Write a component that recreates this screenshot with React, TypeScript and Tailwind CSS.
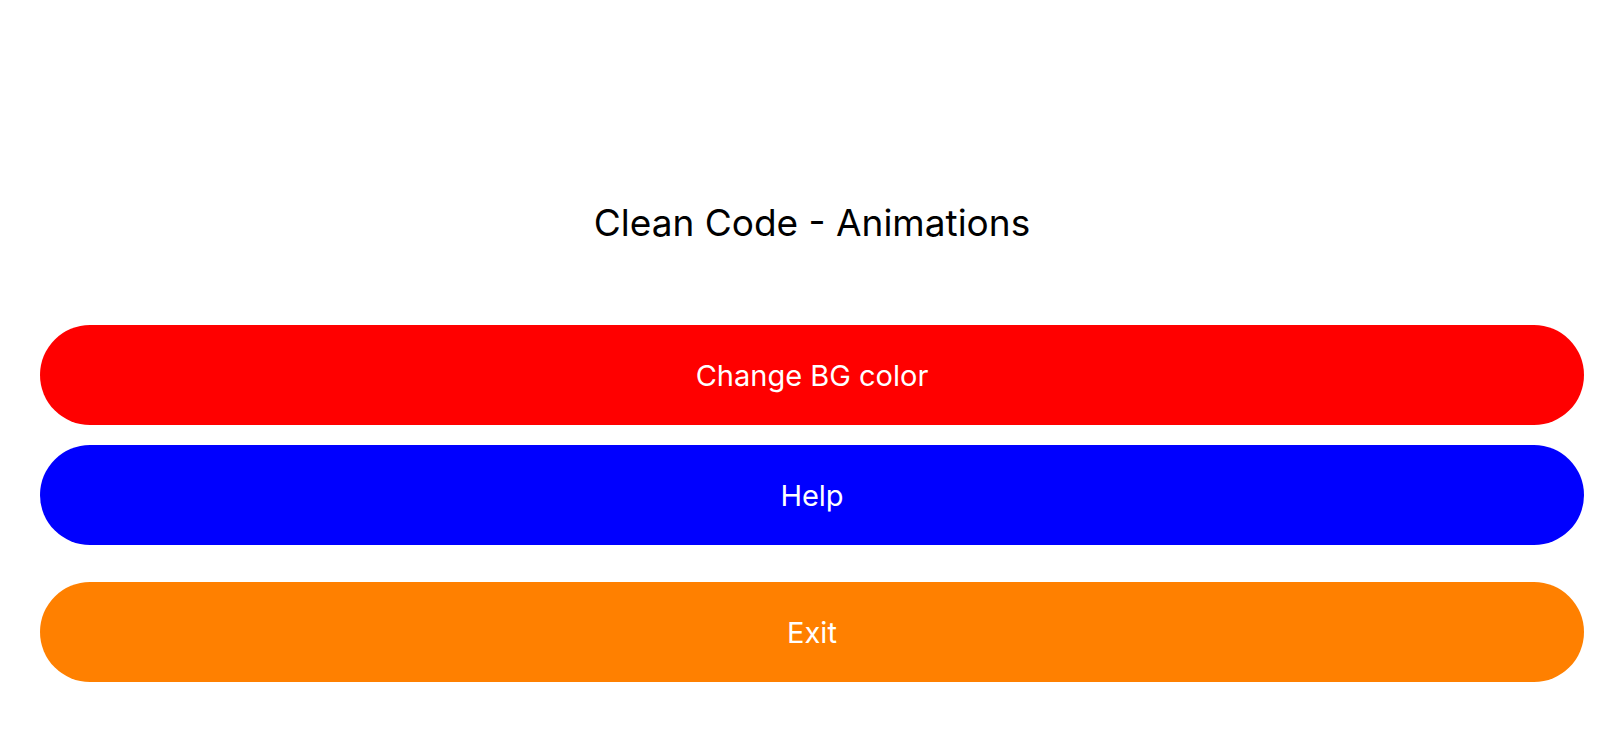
const buttons = [
  { label: "Change BG color", className: "bg-[#ff0000]" },
  { label: "Help", className: "bg-[#0000ff]" },
];

function PillButton({ label, className }: { label: string; className: string }) {
  return (
    <button
      type="button"
      className={`flex h-[100px] w-full items-center justify-center rounded-full text-[29px] leading-none text-white ${className}`}
    >
      {label}
    </button>
  );
}

export default function App() {
  return (
    <div className="min-h-[750px] w-full bg-white px-10 pt-[201px] font-['Inter','Noto_Sans',sans-serif]">
      <h1 className="text-center text-[37px] leading-[44px] font-normal text-black">
        Clean Code - Animations
      </h1>
      <div className="mt-[80px] flex flex-col gap-5">
        {buttons.map((b) => (
          <PillButton key={b.label} label={b.label} className={b.className} />
        ))}
      </div>
      <div className="mt-[37px]">
        <PillButton label="Exit" className="bg-[#ff8000]" />
      </div>
    </div>
  );
}
